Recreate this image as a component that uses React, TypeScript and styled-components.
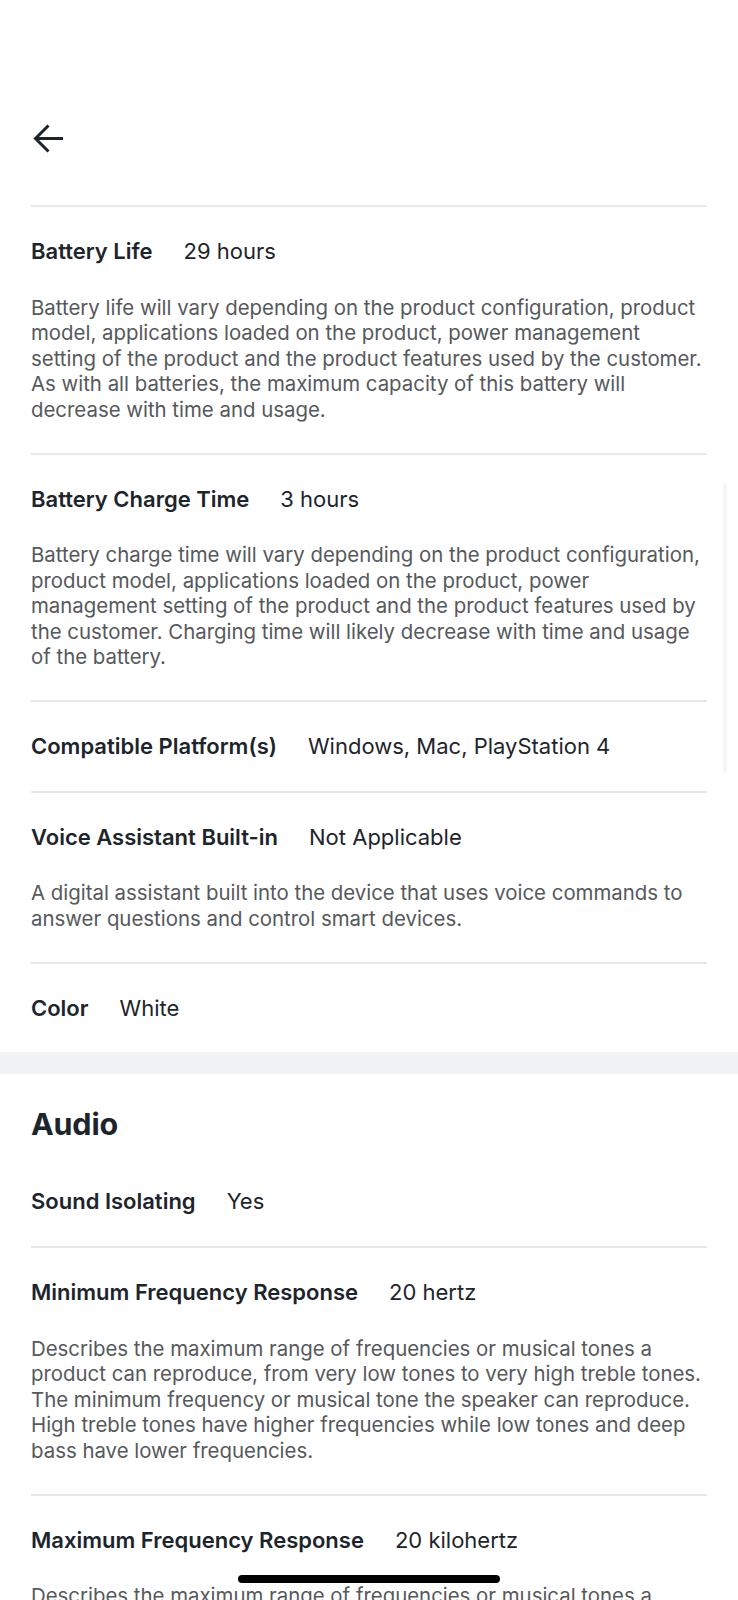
import React from "react";
import styled, { createGlobalStyle } from "styled-components";

const GlobalStyle = createGlobalStyle`
  html, body { margin: 0; padding: 0; background: #ffffff; }
  body {
    font-family: Inter, "Open Sans", "Liberation Sans", sans-serif;
    color: #1d252c;
    -webkit-font-smoothing: antialiased;
  }
`;

const Page = styled.div`
  width: 738px;
  min-height: 1600px;
  position: relative;
  overflow: hidden;
  background: #fff;
`;

const Header = styled.header`
  height: 205px;
  box-sizing: border-box;
  padding: 123px 31px 0;
`;

const BackButton = styled.button`
  display: flex;
  align-items: center;
  justify-content: center;
  width: 32px;
  height: 31px;
  padding: 0;
  margin-left: 2px;
  border: none;
  background: transparent;
  color: #1d252c;
  cursor: pointer;
`;

const Section = styled.section<{ $top?: number }>`
  padding: ${(p) => p.$top ?? 0}px 31px 0;
`;

const SectionTitle = styled.h2`
  margin: 0 0 15px;
  font-size: 30.5px;
  line-height: 36px;
  font-weight: 700;
  letter-spacing: -0.2px;
  color: #1d252c;
`;

const Row = styled.div<{ $noBorder?: boolean }>`
  border-top: ${(p) => (p.$noBorder ? "none" : "2px solid #e6e8ec")};
  padding: 30px 0 30.6px;
`;

const RowHead = styled.div`
  display: flex;
  align-items: baseline;
  gap: 31px;
  font-size: 22px;
  line-height: 28px;
`;

const Label = styled.span`
  font-weight: 600;
  color: #1d252c;
`;

const Value = styled.span`
  font-weight: 400;
  color: #1d252c;
`;

const Description = styled.p`
  margin: 29.5px 0 0;
  font-size: 20.4px;
  line-height: 25.5px;
  color: #55595c;
  font-weight: 400;
`;

const Band = styled.div`
  height: 22px;
  background: #f0f2f4;
`;

const HomeIndicator = styled.div`
  position: absolute;
  left: 238px;
  top: 1575px;
  width: 262px;
  height: 8px;
  border-radius: 4px;
  background: #000;
`;

const ScrollHint = styled.div`
  position: absolute;
  left: 723px;
  top: 483px;
  width: 4px;
  height: 290px;
  background: #f5f6f7;
  border-radius: 2px;
`;

type Spec = { label: string; value: string; desc?: string };

const general: Spec[] = [
  {
    label: "Battery Life",
    value: "29 hours",
    desc: "Battery life will vary depending on the product configuration, product model, applications loaded on the product, power management setting of the product and the product features used by the customer. As with all batteries, the maximum capacity of this battery will decrease with time and usage.",
  },
  {
    label: "Battery Charge Time",
    value: "3 hours",
    desc: "Battery charge time will vary depending on the product configuration, product model, applications loaded on the product, power management setting of the product and the product features used by the customer. Charging time will likely decrease with time and usage of the battery.",
  },
  { label: "Compatible Platform(s)", value: "Windows, Mac, PlayStation 4" },
  {
    label: "Voice Assistant Built-in",
    value: "Not Applicable",
    desc: "A digital assistant built into the device that uses voice commands to answer questions and control smart devices.",
  },
  { label: "Color", value: "White" },
];

const audio: Spec[] = [
  { label: "Sound Isolating", value: "Yes" },
  {
    label: "Minimum Frequency Response",
    value: "20 hertz",
    desc: "Describes the maximum range of frequencies or musical tones a product can reproduce, from very low tones to very high treble tones. The minimum frequency or musical tone the speaker can reproduce. High treble tones have higher frequencies while low tones and deep bass have lower frequencies.",
  },
  {
    label: "Maximum Frequency Response",
    value: "20 kilohertz",
    desc: "Describes the maximum range of frequencies or musical tones a product can reproduce, from very low tones to very high treble tones.",
  },
];

const SpecRow = ({ spec, noBorder }: { spec: Spec; noBorder?: boolean }) => (
  <Row $noBorder={noBorder}>
    <RowHead>
      <Label>{spec.label}</Label>
      <Value>{spec.value}</Value>
    </RowHead>
    {spec.desc && <Description>{spec.desc}</Description>}
  </Row>
);

export default function App() {
  return (
    <Page>
      <GlobalStyle />
      <Header>
        <BackButton aria-label="Back">
          <svg width="32" height="31" viewBox="0 0 32 31" fill="none">
            <path
              d="M30 15.5H3M15.5 2.5L2.5 15.5L15.5 28.5"
              stroke="currentColor"
              strokeWidth="3"
              strokeLinecap="butt"
              strokeLinejoin="miter"
            />
          </svg>
        </BackButton>
      </Header>
      <Section>
        {general.map((s) => (
          <SpecRow key={s.label} spec={s} />
        ))}
      </Section>
      <Band />
      <Section $top={32}>
        <SectionTitle>Audio</SectionTitle>
        {audio.map((s, i) => (
          <SpecRow key={s.label} spec={s} noBorder={i === 0} />
        ))}
      </Section>
      <ScrollHint />
      <HomeIndicator />
    </Page>
  );
}
